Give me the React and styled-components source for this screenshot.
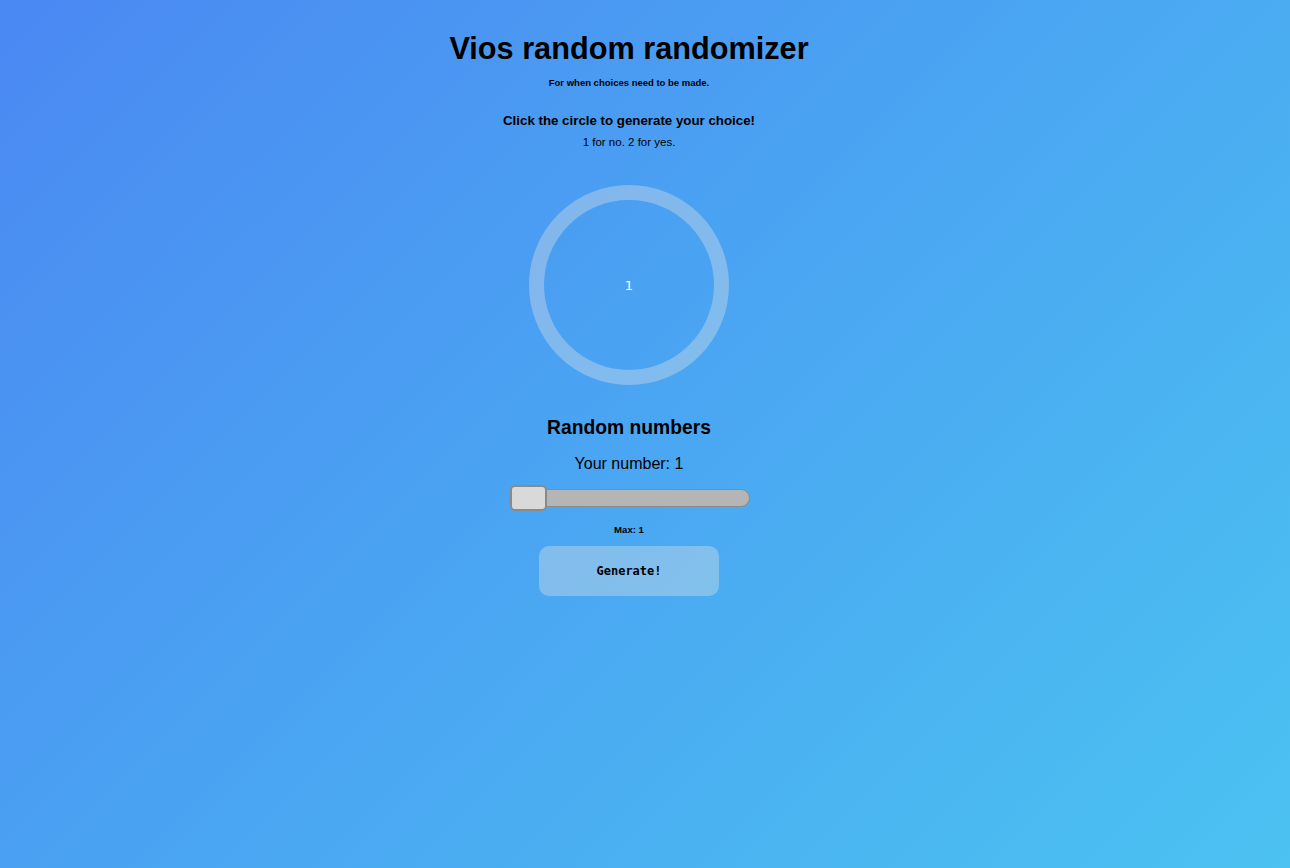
import React, { useState } from 'react';
import styled, { createGlobalStyle } from 'styled-components';

const GlobalStyle = createGlobalStyle`
  html, body {
    margin: 0;
    padding: 0;
    min-height: 100%;
  }
  body {
    font-family: 'Liberation Sans', Arial, sans-serif;
    color: #000;
  }
`;

const Page = styled.main`
  min-height: 868px;
  display: flex;
  flex-direction: column;
  align-items: center;
  padding: 30px 32px 0 0;
  box-sizing: border-box;
  background: linear-gradient(135deg, #4a88f3 0%, #4aa6f2 50%, #4bc2f1 100%);
`;

const Title = styled.h1`
  margin: 0;
  font-size: 30.7px;
  font-weight: 700;
  line-height: 38px;
`;

const Subtitle = styled.p`
  margin: 9px 0 0;
  font-size: 9.5px;
  font-weight: 700;
  line-height: 12px;
`;

const Prompt = styled.p`
  margin: 23px 0 0;
  font-size: 13.3px;
  font-weight: 700;
  line-height: 18px;
`;

const Hint = styled.p`
  margin: 4px 0 0;
  font-size: 11.5px;
  line-height: 16px;
`;

const Circle = styled.button`
  margin-top: 35px;
  width: 200px;
  height: 200px;
  border-radius: 50%;
  border: 15px solid rgba(228, 228, 228, 0.37);
  background: transparent;
  color: #fff;
  font-family: 'DejaVu Sans', sans-serif;
  font-size: 13px;
  display: flex;
  align-items: center;
  justify-content: center;
  padding: 0;
  cursor: pointer;
  box-sizing: border-box;
`;

const SectionTitle = styled.h2`
  margin: 30px 0 0;
  font-size: 19.3px;
  font-weight: 700;
  line-height: 26px;
`;

const NumberLabel = styled.p`
  margin: 13px 0 0;
  font-size: 16px;
  line-height: 20px;
`;

const Slider = styled.input`
  -webkit-appearance: none;
  appearance: none;
  margin: 15px 0 0;
  width: 241px;
  height: 18px;
  background: #b5b5b5;
  border: 1px solid #8a8a8a;
  border-radius: 9px;
  box-sizing: border-box;
  outline: none;

  &::-webkit-slider-thumb {
    -webkit-appearance: none;
    appearance: none;
    width: 37px;
    height: 26px;
    background: #d9d9d9;
    border: 2px solid #8a8a8a;
    border-radius: 5px;
    box-sizing: border-box;
    cursor: pointer;
  }
`;

const MaxLabel = styled.p`
  margin: 17px 0 0;
  font-size: 9.6px;
  font-weight: 700;
  line-height: 12px;
`;

const GenerateButton = styled.button`
  margin-top: 10px;
  width: 180px;
  height: 50px;
  border: none;
  border-radius: 10px;
  background: rgba(228, 228, 228, 0.37);
  font-family: 'DejaVu Sans Mono', monospace;
  font-size: 12px;
  font-weight: 700;
  color: #000;
  cursor: pointer;
`;

export default function App() {
  const [choice, setChoice] = useState(1);
  const [max, setMax] = useState(1);
  const [number, setNumber] = useState(1);

  return (
    <>
      <GlobalStyle />
      <Page>
        <Title>Vios random randomizer</Title>
        <Subtitle>For when choices need to be made.</Subtitle>
        <Prompt>Click the circle to generate your choice!</Prompt>
        <Hint>1 for no. 2 for yes.</Hint>
        <Circle onClick={() => setChoice(Math.ceil(Math.random() * 2))}>
          {choice}
        </Circle>
        <SectionTitle>Random numbers</SectionTitle>
        <NumberLabel>Your number: {number}</NumberLabel>
        <Slider
          type="range"
          min="1"
          max="100"
          value={max}
          onChange={(e) => setMax(Number(e.target.value))}
        />
        <MaxLabel>Max: {max}</MaxLabel>
        <GenerateButton onClick={() => setNumber(Math.ceil(Math.random() * max))}>
          Generate!
        </GenerateButton>
      </Page>
    </>
  );
}
